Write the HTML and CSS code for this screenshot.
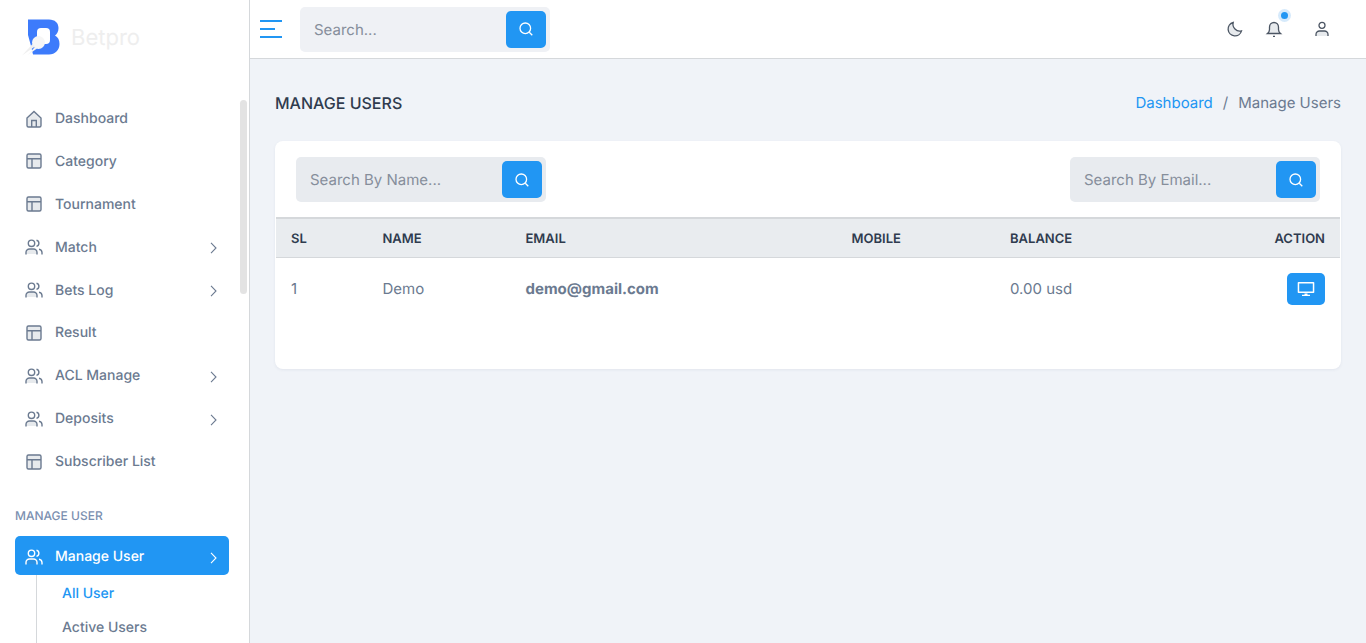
FILE: index.html
```html
<!DOCTYPE html>
<html lang="en">
<head>
    <meta charset="UTF-8">
    <meta name="viewport" content="width=device-width, initial-scale=1.0">
    <title>Manage Users - Betpro</title>
    <link rel="stylesheet" href="styles.css">
</head>
<body>
    <svg class="icon-defs" width="0" height="0">
        <symbol id="i-home" viewBox="0 0 18 18"><path class="duo" d="M2 8 9 1.500 16 8v7.500a1.500 1.500 0 0 1-1.500 1.500h-11A1.500 1.500 0 0 1 2 15.500z"/><path d="M2 8 9 1.500 16 8v7.500a1.500 1.500 0 0 1-1.500 1.500h-11A1.500 1.500 0 0 1 2 15.500zM6.700 17v-6.500h4.600V17"/></symbol>
        <symbol id="i-layout" viewBox="0 0 18 18"><rect class="duo" x="2" y="2" width="14" height="14" rx="1.500"/><path d="M3.500 2h11A1.500 1.500 0 0 1 16 3.500v11a1.500 1.500 0 0 1-1.500 1.500h-11A1.500 1.500 0 0 1 2 14.500v-11A1.500 1.500 0 0 1 3.500 2zM2 6.700h14M7 6.700V16"/></symbol>
        <symbol id="i-users" viewBox="0 0 18 18"><path class="duo" d="M1 16v-1.500A3.500 3.500 0 0 1 4.500 11h4a3.500 3.500 0 0 1 3.500 3.500V16z"/><circle cx="6.500" cy="5.300" r="3.200"/><path d="M1 16.500v-2A3.500 3.500 0 0 1 4.500 11h4a3.500 3.500 0 0 1 3.500 3.500v2M11.500 2.200a3.200 3.200 0 0 1 0 6.200M14 11.200a3.500 3.500 0 0 1 3 3.300v2"/></symbol>
        <symbol id="i-chevron" viewBox="0 0 7 12"><path d="M1 .8 6 6l-5 5.200"/></symbol>
        <symbol id="i-search" viewBox="0 0 16 16"><circle cx="7.300" cy="7.300" r="5.300"/><path d="M11.300 11.300l3 3"/></symbol>
    </svg>

    <div id="app">
        <aside class="sidebar">
            <div class="logo">
                <svg class="logo-mark" viewBox="0 0 40 40" width="40" height="40">
                    <path fill="#3d7bfb" d="M6 1.500h21c6 0 9.500 3.500 9.500 8.500 0 3.500-1.500 6-3.500 7.500 3 1.500 4.500 4.500 4.500 8.500 0 6-4.500 10.500-10.500 10.500H11L9 28 6 17z"/>
                    <rect fill="#fff" x="15" y="10" width="13" height="16" rx="4"/>
                    <circle fill="#f6f6f6" cx="16.500" cy="24.500" r="6.500"/>
                    <path fill="#efefef" d="M0 37.500 10.500 26l2.500 2.500z"/>
                    <path fill="#f5f5f5" d="M5 37.500 13 29l2 1.500z"/>
                </svg>
                <span class="logo-text">Betpro</span>
            </div>

            <nav class="menu">
                <a class="menu-item"><svg class="ico"><use href="#i-home"/></svg>Dashboard</a>
                <a class="menu-item"><svg class="ico"><use href="#i-layout"/></svg>Category</a>
                <a class="menu-item"><svg class="ico"><use href="#i-layout"/></svg>Tournament</a>
                <a class="menu-item"><svg class="ico"><use href="#i-users"/></svg>Match<svg class="chevron"><use href="#i-chevron"/></svg></a>
                <a class="menu-item"><svg class="ico"><use href="#i-users"/></svg>Bets Log<svg class="chevron"><use href="#i-chevron"/></svg></a>
                <a class="menu-item"><svg class="ico"><use href="#i-layout"/></svg>Result</a>
                <a class="menu-item"><svg class="ico"><use href="#i-users"/></svg>ACL Manage<svg class="chevron"><use href="#i-chevron"/></svg></a>
                <a class="menu-item"><svg class="ico"><use href="#i-users"/></svg>Deposits<svg class="chevron"><use href="#i-chevron"/></svg></a>
                <a class="menu-item"><svg class="ico"><use href="#i-layout"/></svg>Subscriber List</a>

                <div class="menu-title">MANAGE USER</div>
                <a class="menu-item active"><svg class="ico"><use href="#i-users"/></svg>Manage User<svg class="chevron"><use href="#i-chevron"/></svg></a>
                <div class="submenu">
                    <a class="sub-item current">All User</a>
                    <a class="sub-item">Active Users</a>
                </div>
            </nav>
            <div class="scroll-thumb"></div>
        </aside>

        <div class="main">
            <header class="topbar">
                <button class="burger" aria-label="Menu"><span></span><span class="short"></span><span></span></button>
                <div class="search-box top-search">
                    <input type="text" placeholder="Search...">
                    <button class="search-btn"><svg class="ico-search"><use href="#i-search"/></svg></button>
                </div>
                <div class="top-icons">
                    <svg class="top-ico moon" viewBox="0 0 18 18"><path class="duo" d="M15.500 10.800A6.800 6.800 0 0 1 7.200 2.500a6.800 6.800 0 1 0 8.300 8.300z"/><path d="M15.500 10.800A6.800 6.800 0 0 1 7.200 2.500a6.800 6.800 0 1 0 8.300 8.300z"/></svg>
                    <span class="bell-wrap">
                        <svg class="top-ico" viewBox="0 0 18 18"><path class="duo" d="M3 13c1-1 1.500-2 1.500-3.500V7a4.500 4.500 0 0 1 9 0v2.500c0 1.500.5 2.500 1.500 3.500z"/><path d="M2.500 13.500h13c-1.300-1-2-2.300-2-4V7a4.500 4.500 0 0 0-9 0v2.500c0 1.700-.7 3-2 4zM8 16.300h2"/></svg>
                        <span class="dot"></span>
                    </span>
                    <svg class="top-ico user" viewBox="0 0 18 18"><path class="duo" d="M3 16v-1.500A3.500 3.500 0 0 1 6.500 11h5a3.500 3.500 0 0 1 3.500 3.500V16z"/><circle cx="9" cy="5.300" r="3"/><path d="M3 16v-1.500A3.500 3.500 0 0 1 6.500 11h5a3.500 3.500 0 0 1 3.500 3.500V16"/></svg>
                </div>
            </header>

            <main class="content">
                <div class="page-head">
                    <h1>MANAGE USERS</h1>
                    <div class="crumbs"><a>Dashboard</a><span class="sep">/</span><span>Manage Users</span></div>
                </div>

                <section class="card">
                    <div class="filters">
                        <div class="search-box">
                            <input type="text" placeholder="Search By Name...">
                            <button class="search-btn"><svg class="ico-search"><use href="#i-search"/></svg></button>
                        </div>
                        <div class="search-box">
                            <input type="text" placeholder="Search By Email...">
                            <button class="search-btn"><svg class="ico-search"><use href="#i-search"/></svg></button>
                        </div>
                    </div>

                    <table class="users">
                        <colgroup>
                            <col class="c-sl"><col class="c-name"><col class="c-email"><col class="c-mobile"><col class="c-balance"><col>
                        </colgroup>
                        <thead>
                            <tr><th>SL</th><th>NAME</th><th>EMAIL</th><th>MOBILE</th><th>BALANCE</th><th class="right">ACTION</th></tr>
                        </thead>
                        <tbody>
                            <tr>
                                <td>1</td>
                                <td>Demo</td>
                                <td><strong>demo@gmail.com</strong></td>
                                <td></td>
                                <td>0.00 usd</td>
                                <td class="right">
                                    <button class="view-btn" aria-label="View">
                                        <svg viewBox="0 0 18 16" width="18" height="16"><path fill="#fff" d="M1.500 1h15a.8.8 0 0 1 .8.8v9.400a.8.800 0 0 1-.8.800h-15a.8.800 0 0 1-.8-.800V1.800a.8.800 0 0 1 .8-.8zm.7 1.500v8h13.600v-8zM7.500 12.500h3v1.300h2.500V15H5v-1.200h2.500z"/></svg>
                                    </button>
                                </td>
                            </tr>
                        </tbody>
                    </table>
                </section>
            </main>
        </div>
    </div>
</body>
</html>
```

FILE: styles.css
```css
* {
    box-sizing: border-box;
}

html,
body {
    height: 100%;
}

body {
    margin: 0;
    overflow: hidden;
    font-family: Inter, "Liberation Sans", sans-serif;
    font-size: 14px;
    color: #6b7a90;
    background-color: #f0f3f8;
    text-rendering: geometricPrecision;
}

.icon-defs {
    position: absolute;
}

#app {
    display: flex;
    height: 100vh;
}

/* Sidebar */
.sidebar {
    position: relative;
    flex: 0 0 250px;
    background-color: #fff;
    border-right: 1px solid #d5d8db;
    overflow: hidden;
}

.logo {
    display: flex;
    align-items: center;
    height: 58px;
    padding: 17px 0 0 22px;
}

.logo-mark {
    flex: none;
}

.logo-text {
    margin-left: 9px;
    font-size: 22px;
    font-weight: 400;
    color: #eeeeee;
}

.menu {
    padding: 40px 20px 0 15px;
}

.menu-item {
    display: flex;
    align-items: center;
    height: 39px;
    margin-bottom: 3.9px;
    padding-top: 2px;
    padding-left: 10px;
    font-weight: 500;
    color: #6b7a90;
    border-radius: 5px;
}

.ico {
    flex: none;
    width: 18px;
    height: 18px;
    margin-right: 12px;
    fill: none;
    stroke: currentColor;
    stroke-width: 1.400;
}

.duo {
    fill: #6b7a90;
    fill-opacity: 0.16;
    stroke: none;
}

.chevron {
    width: 7px;
    height: 12px;
    margin-top: 2px;
    margin-left: auto;
    margin-right: 12px;
    fill: none;
    stroke: currentColor;
    stroke-width: 1.100;
}

.menu-title {
    margin: 27px 0 0;
    height: 29px;
    font-size: 12px;
    font-weight: 500;
    line-height: 17px;
    color: #7b8fb0;
}

.menu-item.active {
    margin-bottom: 0;
    color: #fff;
    background-color: #2196f3;
}

.submenu {
    margin-left: 21px;
    padding-left: 25px;
    border-left: 1px solid #d5d8db;
}

.sub-item {
    display: block;
    height: 34px;
    font-weight: 500;
    line-height: 38px;
    color: #6b7a90;
}

.sub-item.current {
    color: #2196f3;
}

.scroll-thumb {
    position: absolute;
    top: 100px;
    left: 240px;
    width: 7px;
    height: 194px;
    background-color: #e3e3e3;
    border-radius: 4px;
}

/* Top bar */
.main {
    flex: 1;
    min-width: 0;
}

.topbar {
    display: flex;
    align-items: center;
    height: 59px;
    padding-left: 10px;
    padding-right: 35px;
    background-color: #fff;
    border-bottom: 1px solid #d5d8db;
}

.burger {
    width: 22px;
    margin-right: 18px;
    padding: 0;
    border: 0;
    background: none;
}

.burger span {
    display: block;
    height: 2px;
    margin-bottom: 6px;
    background-color: #2196f3;
}

.burger span:last-child {
    margin-bottom: 0;
}

.burger .short {
    width: 15px;
}

.search-box {
    display: flex;
    align-items: center;
    justify-content: space-between;
    width: 250px;
    height: 45px;
    padding: 0 4px 0 14px;
    background-color: #e8ebef;
    border-radius: 5px;
}

.top-search {
    background-color: #eff1f5;
}

.search-box input {
    flex: 1;
    min-width: 0;
    padding: 0;
    border: 0;
    outline: 0;
    background: none;
    font-family: inherit;
    font-size: 15px;
    text-rendering: geometricPrecision;
    color: #6b7a90;
}

.search-box input::placeholder {
    color: #868e9b;
    opacity: 1;
}

.search-btn {
    display: flex;
    align-items: center;
    justify-content: center;
    flex: none;
    width: 40px;
    height: 37px;
    padding: 0;
    border: 0;
    border-radius: 5px;
    background-color: #2196f3;
}

.ico-search {
    width: 16px;
    height: 16px;
    fill: none;
    stroke: #fff;
    stroke-width: 1.300;
}

.top-icons {
    display: flex;
    align-items: center;
    margin-left: auto;
}

.top-ico {
    display: block;
    width: 18px;
    height: 18px;
    fill: none;
    stroke: #4b5563;
    stroke-width: 1.300;
}

.bell-wrap {
    position: relative;
    margin-left: 21px;
}

.dot {
    position: absolute;
    top: -8px;
    right: -5px;
    width: 7px;
    height: 7px;
    background-color: #2196f3;
    border-radius: 50%;
    box-shadow: 0 0 0 3px #d6eafb;
}

.top-ico.user {
    margin-left: 30px;
}

/* Content */
.content {
    padding: 0 25px;
}

.page-head {
    display: flex;
    align-items: center;
    justify-content: space-between;
    height: 82px;
    padding-top: 5px;
}

.page-head h1 {
    margin: 0;
    font-size: 16px;
    font-weight: 500;
    color: #2f3b4e;
}

.crumbs {
    font-size: 15px;
    color: #6b7a90;
}

.crumbs a {
    color: #2196f3;
}

.crumbs .sep {
    margin: 0 10px;
}

.card {
    height: 228px;
    padding: 16px 1px 0;
    background-color: #fff;
    border-radius: 8px;
    box-shadow: 0 1px 3px rgba(60, 80, 110, 0.08);
}

.filters {
    display: flex;
    justify-content: space-between;
    padding: 0 20px;
    margin-bottom: 15px;
}

.users {
    width: 100%;
    border-collapse: collapse;
    table-layout: fixed;
}

.c-sl { width: 91.5px; }
.c-name { width: 143px; }
.c-email { width: 326px; }
.c-mobile { width: 158.5px; }
.c-balance { width: 170px; }

.users th {
    height: 39px;
    padding: 2px 0 0 15px;
    font-size: 13px;
    font-weight: 600;
    text-align: left;
    color: #2f3b4e;
    background-color: #e9ecef;
    border-top: 2px solid #d5d8db;
    border-bottom: 1px solid #d5d8db;
}

.users td {
    height: 62px;
    padding: 0 0 0 15px;
    font-size: 15px;
    color: #6b7a90;
}

.users .right {
    padding-right: 15px;
    text-align: right;
}

.users td.right {
    padding-top: 2px;
}

.view-btn {
    display: inline-flex;
    align-items: center;
    justify-content: center;
    width: 38px;
    height: 32px;
    padding: 0;
    border: 0;
    border-radius: 5px;
    background-color: #2196f3;
    vertical-align: middle;
}
```
